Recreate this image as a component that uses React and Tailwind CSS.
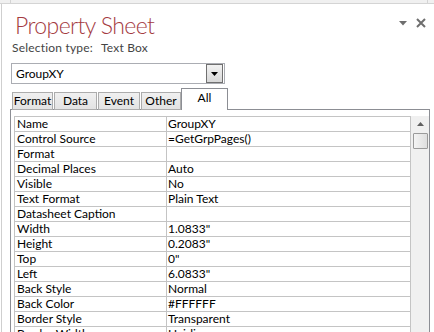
const rows = [
  ["Name", "GroupXY"],
  ["Control Source", "=GetGrpPages()"],
  ["Format", ""],
  ["Decimal Places", "Auto"],
  ["Visible", "No"],
  ["Text Format", "Plain Text"],
  ["Datasheet Caption", ""],
  ["Width", "1.0833\""],
  ["Height", "0.2083\""],
  ["Top", "0\""],
  ["Left", "6.0833\""],
  ["Back Style", "Normal"],
  ["Back Color", "#FFFFFF"],
  ["Border Style", "Transparent"],
  ["Border Width", "Hairline"],
];

// tab captions and their widths in px
const tabs = [
  ["Format", "w-[41px]"],
  ["Data", "w-[43px] ml-[1px]"],
  ["Event", "w-[42px] ml-[1px]"],
  ["Other", "w-[40px] ml-[1px]"],
];

export default function App() {
  return (
    <div className="w-[434px] h-[332px] bg-white overflow-hidden font-['Lato','Noto_Sans',sans-serif] text-[12px] text-black">
      {/* thin frame strip at the top */}
      <div className="h-[4px] bg-[#f0f0f0] border-b border-[#d4d4d4] flex">
        <div className="w-[11px] border-r border-[#d4d4d4]" />
        <div className="flex-1" />
        <div className="w-[7px] border-l border-[#d4d4d4]" />
      </div>

      <div className="h-[328px] ml-[1px] border-l border-[#cfcfcf] flex flex-col">
        {/* header */}
        <div className="flex items-start justify-between">
          <div className="ml-[13px] mt-[7px] text-[23px] leading-[28px] font-light text-[#a43b3f] tracking-[-0.6px]">
            Property Sheet
          </div>
          <div className="flex items-center gap-[9px] mt-[14px] mr-[8px]">
            <svg width="8" height="5" viewBox="0 0 8 5">
              <path d="M0 0 H8 L4 4.5 Z" fill="#6e6e6e" />
            </svg>
            <svg width="10" height="10" viewBox="0 0 10 10">
              <path d="M1 1 L9 9 M9 1 L1 9" stroke="#6e6e6e" strokeWidth="2" />
            </svg>
          </div>
        </div>

        <div className="ml-[10px] mt-[1px] leading-[15px] text-[#444] tracking-[0.2px] whitespace-nowrap">
          Selection type:<span className="ml-[8px]">Text Box</span>
        </div>

        {/* object selector */}
        <div className="ml-[9px] mt-[8px] w-[214px] h-[23px] border border-[#abadb3] flex items-center">
          <div className="flex-1 pl-[4px] leading-[15px]">GroupXY</div>
          <div className="w-[17px] h-[19px] mr-[1px] border border-[#707070] bg-gradient-to-b from-[#f2f2f2] to-[#d8d8d8] flex items-center justify-center">
            <svg width="7" height="4" viewBox="0 0 7 4">
              <path d="M0 0 H7 L3.5 4 Z" fill="#000" />
            </svg>
          </div>
        </div>

        {/* tabs */}
        <div className="ml-[10px] mt-[4px] h-[22px] flex items-end relative z-10">
          {tabs.map(([t, w]) => (
            <div
              key={t}
              className={
                "h-[18px] -mb-[1px] border border-[#acacac] bg-gradient-to-b from-[#f0f0f0] to-[#e3e3e3] leading-[16px] text-center " +
                w
              }
            >
              {t}
            </div>
          ))}
          <div className="h-[22px] w-[47px] -mb-[1px] border border-b-0 border-[#8c8e94] bg-white leading-[18px] text-center">
            All
          </div>
        </div>

        {/* tab body */}
        <div className="ml-[8px] w-[420px] flex-1 border-l border-t border-r border-[#8c8e94] pl-[3px] pt-[6px] flex items-start">
          <div className="w-[397px] border-t border-l border-[#c4c4c4]">
            {rows.map(([k, v]) => (
              <div key={k} className="flex h-[15px] border-b border-[#c4c4c4] leading-[14px]">
                <div className="w-[152px] pl-[2px] border-r border-[#c4c4c4] whitespace-nowrap">{k}</div>
                <div className="flex-1 pl-[1px] border-r border-[#c4c4c4] whitespace-nowrap">{v}</div>
              </div>
            ))}
          </div>
          <div className="w-[18px] self-stretch bg-[#f0f0f0] flex flex-col items-center">
            <div className="h-[16px] w-full flex items-center justify-center">
              <svg width="7" height="4" viewBox="0 0 7 4">
                <path d="M3.5 0 L7 4 H0 Z" fill="#606060" />
              </svg>
            </div>
            <div className="mt-[1px] w-[15px] h-[16px] border border-[#9a9a9a] rounded-[1px] bg-gradient-to-r from-[#f4f4f4] to-[#dedede]" />
          </div>
        </div>
      </div>
    </div>
  );
}
